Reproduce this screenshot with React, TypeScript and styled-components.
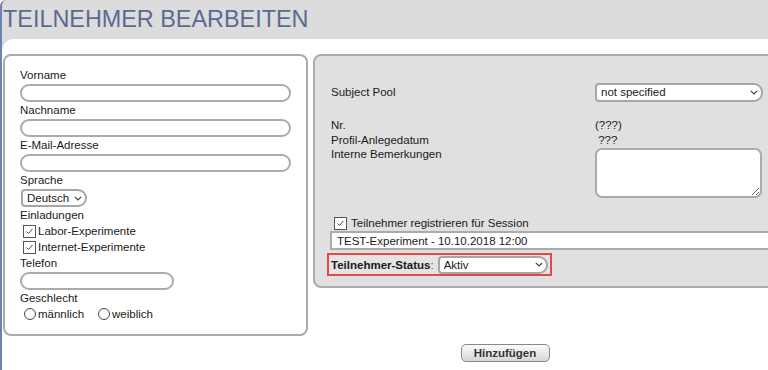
import styled, { createGlobalStyle } from "styled-components";

const chevron =
  "url(\"data:image/svg+xml,%3Csvg xmlns='http://www.w3.org/2000/svg' width='8' height='5' viewBox='0 0 8 5'%3E%3Cpath d='M0.8 0.8l3.2 3.2 3.2-3.2' fill='none' stroke='%23444' stroke-width='1.2'/%3E%3C/svg%3E\")";

const tick =
  "url(\"data:image/svg+xml,%3Csvg xmlns='http://www.w3.org/2000/svg' width='11' height='11' viewBox='0 0 11 11'%3E%3Cpath d='M2.5 5.5l2 2 4-4.6' fill='none' stroke='%23333' stroke-width='0.9'/%3E%3C/svg%3E\")";

const GlobalStyle = createGlobalStyle`
  body {
    margin: 0;
    background: #fff;
    overflow: hidden;
    font-family: "Liberation Sans", Arial, sans-serif;
    font-size: 11.5px;
    color: #1a1a1a;
  }
`;

const Frame = styled.div`
  width: max-content;
  min-height: 370px;
  background: #dcdcdc;
  border-left: 2px solid #6f80b3;
  border-top-left-radius: 6px;
`;

const Title = styled.h1`
  margin: 0;
  height: 39px;
  padding-left: 1px;
  font-size: 23.4px;
  line-height: 39px;
  font-weight: normal;
  color: #5b6a93;
`;

const Content = styled.div`
  width: 1005px;
  min-height: 331px;
  box-sizing: border-box;
  padding: 15px 0 8px 1px;
  background: #fff;
  border-top-left-radius: 12px;
`;

const PanelRow = styled.div`
  display: flex;
  align-items: flex-start;
  gap: 5px;
`;

const Panel = styled.div<{ $grey?: boolean }>`
  box-sizing: border-box;
  border: 2px solid #ababab;
  border-radius: 8px;
  background: ${(p) => (p.$grey ? "#e0e0e0" : "#fff")};
`;

const PersonPanel = styled(Panel)`
  width: 305px;
  padding: 11px 15px 12px;
`;

const SessionPanel = styled(Panel)`
  flex: 1;
  padding: 27px 12px 10px;
`;

const FieldLabel = styled.div`
  line-height: 16px;
  height: 16px;
`;

const TextInput = styled.input`
  display: block;
  box-sizing: border-box;
  width: ${(p) => p.width}px;
  height: 18px;
  margin: 1px 0 0;
  padding: 0 6px;
  border: 2px solid #ababab;
  border-radius: 9px;
  background: #fff;
  font: inherit;
  outline: none;
`;

const Select = styled.select<{ $w: number; $h?: number }>`
  appearance: none;
  display: block;
  box-sizing: border-box;
  width: ${(p) => p.$w}px;
  height: ${(p) => p.$h ?? 18}px;
  margin: 1px 0 0;
  padding: 0 10px 0 4px;
  border: 2px solid #a6a6a6;
  border-radius: 4px 9px 9px 4px;
  background: #fff ${chevron} no-repeat right 3px center;
  font: inherit;
  color: #1a1a1a;
  outline: none;
`;

const CheckRow = styled.label<{ $h?: number }>`
  display: flex;
  align-items: center;
  height: ${(p) => p.$h ?? 16}px;
`;

const Checkbox = styled.input.attrs({ type: "checkbox" })<{ $gap?: number }>`
  appearance: none;
  box-sizing: border-box;
  width: 13px;
  height: 13px;
  margin: 0 ${(p) => p.$gap ?? 2}px 0 3px;
  border: 1px solid #555;
  background: #fff;
  &:checked {
    background: #fff ${tick} no-repeat center;
  }
`;

const RadioRow = styled.div`
  display: flex;
  align-items: center;
  height: 16px;
`;

const Radio = styled.input.attrs({ type: "radio" })`
  appearance: none;
  box-sizing: border-box;
  width: 12px;
  height: 12px;
  margin: 0 2px 0 4px;
  border: 1px solid #444;
  border-radius: 50%;
  background: #fff;
`;

const RadioText = styled.span`
  margin-right: 10px;
`;

const InfoGrid = styled.div`
  display: grid;
  grid-template-columns: 264px 168px;
  margin-left: 4px;
  line-height: 14.5px;
`;

const PoolLabel = styled.div`
  align-self: center;
  margin-bottom: 16px;
`;

const PoolSelect = styled(Select)`
  margin: 0 0 16px;
  height: 19px;
`;

const Notes = styled.textarea`
  box-sizing: border-box;
  width: 167px;
  height: 50px;
  margin: 1px 0 0;
  border: 2px solid #ababab;
  border-radius: 7px;
  background: #fff;
  font: inherit;
  outline: none;
`;

const SessionBlock = styled.div`
  margin-top: 18px;
`;

const SessionCheck = styled(CheckRow)`
  height: 14px;
  padding-left: 4px;
`;

const SessionSelect = styled.select`
  appearance: none;
  display: block;
  box-sizing: border-box;
  width: 470px;
  height: 19px;
  margin: 1px 0 0 3px;
  padding: 0 5px;
  border: 2px solid #ababab;
  border-radius: 0;
  background: #fff;
  font: inherit;
  color: #1a1a1a;
`;

const StatusBox = styled.div`
  display: inline-flex;
  align-items: center;
  box-sizing: border-box;
  height: 23px;
  margin-top: 3px;
  padding: 0 2px;
  border: 2px solid #e5474b;
  background: #e4e4e4;
`;

const StatusLabel = styled.span`
  font-weight: bold;
`;

const Colon = styled.span`
  color: #555;
  margin-right: 4px;
`;

const Footer = styled.div`
  margin-top: 8px;
  text-align: center;
`;

const Button = styled.button`
  box-sizing: border-box;
  width: 89px;
  height: 18px;
  padding: 0;
  border: 1px solid #888;
  border-radius: 5px;
  background: linear-gradient(#fbfbfb, #d6d6d6);
  font: inherit;
  font-weight: bold;
  color: #333;
`;

function Field({ label, width }: { label: string; width: number }) {
  return (
    <>
      <FieldLabel>{label}</FieldLabel>
      <TextInput width={width} />
    </>
  );
}

export default function App() {
  return (
    <>
      <GlobalStyle />
      <Frame>
        <Title>TEILNEHMER BEARBEITEN</Title>
        <Content>
          <PanelRow>
            <PersonPanel>
              <Field label="Vorname" width={271} />
              <Field label="Nachname" width={271} />
              <Field label="E-Mail-Adresse" width={271} />
              <FieldLabel>Sprache</FieldLabel>
              <Select $w={66} style={{ marginLeft: 1 }} defaultValue="de">
                <option value="de">Deutsch</option>
              </Select>
              <FieldLabel>Einladungen</FieldLabel>
              <CheckRow>
                <Checkbox defaultChecked />
                Labor-Experimente
              </CheckRow>
              <CheckRow>
                <Checkbox defaultChecked />
                Internet-Experimente
              </CheckRow>
              <Field label="Telefon" width={154} />
              <FieldLabel>Geschlecht</FieldLabel>
              <RadioRow>
                <Radio name="g" />
                <RadioText>männlich</RadioText>
                <Radio name="g" />
                <RadioText>weiblich</RadioText>
              </RadioRow>
            </PersonPanel>

            <SessionPanel $grey>
              <InfoGrid>
                <PoolLabel>Subject Pool</PoolLabel>
                <PoolSelect $w={168} defaultValue="ns">
                  <option value="ns">not specified</option>
                </PoolSelect>
                <div>Nr.</div>
                <div>(???)</div>
                <div>Profil-Anlegedatum</div>
                <div>&nbsp;???</div>
                <div>Interne Bemerkungen</div>
                <Notes />
              </InfoGrid>

              <SessionBlock>
                <SessionCheck>
                  <Checkbox defaultChecked $gap={4} />
                  Teilnehmer registrieren für Session
                </SessionCheck>
                <SessionSelect defaultValue="t">
                  <option value="t">TEST-Experiment - 10.10.2018 12:00</option>
                </SessionSelect>
                <StatusBox>
                  <StatusLabel>Teilnehmer-Status</StatusLabel>
                  <Colon>:</Colon>
                  <Select $w={110} $h={18} style={{ margin: 0 }} defaultValue="a">
                    <option value="a">Aktiv</option>
                  </Select>
                </StatusBox>
              </SessionBlock>
            </SessionPanel>
          </PanelRow>

          <Footer>
            <Button type="button">Hinzufügen</Button>
          </Footer>
        </Content>
      </Frame>
    </>
  );
}
